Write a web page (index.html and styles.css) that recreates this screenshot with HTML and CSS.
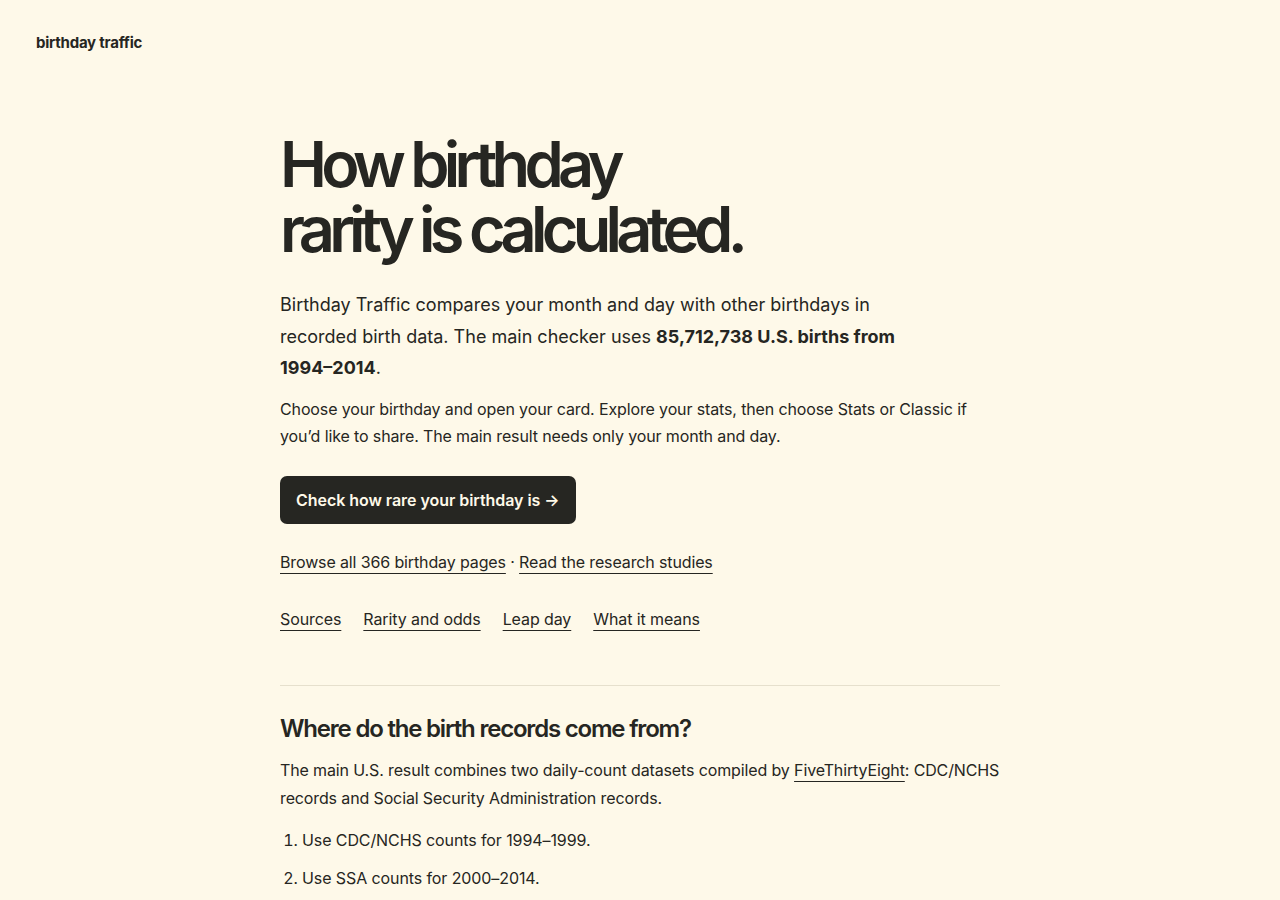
FILE: index.html
```html
<!DOCTYPE html>
<html lang="en">
<head>
<meta charset="utf-8">
<title>How birthday rarity is calculated</title>
<link rel="stylesheet" href="styles.css">
</head>
<body>
<header class="site-header">
  <a class="logo" href="#">birthday traffic</a>
</header>
<main class="content">
  <h1 class="title">How birthday<br>rarity is calculated.</h1>
  <p class="lead">Birthday Traffic compares your month and day with other birthdays in recorded birth data. The main checker uses <strong>85,712,738 U.S. births from 1994–2014</strong>.</p>
  <p class="intro">Choose your birthday and open your card. Explore your stats, then choose Stats or Classic if you’d like to share. The main result needs only your month and day.</p>
  <a class="cta" href="#">Check how rare your birthday is →</a>
  <p class="more"><a href="#">Browse all 366 birthday pages</a> · <a href="#">Read the research studies</a></p>
  <nav class="toc">
    <a href="#">Sources</a>
    <a href="#">Rarity and odds</a>
    <a href="#">Leap day</a>
    <a href="#">What it means</a>
  </nav>
  <section class="section">
    <h2>Where do the birth records come from?</h2>
    <p>The main U.S. result combines two daily-count datasets compiled by <a href="#">FiveThirtyEight</a>: CDC/NCHS records and Social Security Administration records.</p>
    <ol>
      <li>Use CDC/NCHS counts for 1994–1999.</li>
      <li>Use SSA counts for 2000–2014.</li>
    </ol>
  </section>
</main>
</body>
</html>
```
FILE: styles.css
```css
* { box-sizing: border-box; }
html, body { margin: 0; padding: 0; }
body {
  background: #fef9e9;
  color: #262622;
  font-family: Inter, "Noto Sans", sans-serif;
  -webkit-font-smoothing: antialiased;
}
a { color: inherit; }
.site-header {
  padding: 32px 36px 0;
  height: 52px;
}
.logo {
  font-size: 15px;
  font-weight: 700;
  letter-spacing: -0.015em;
  text-decoration: none;
  line-height: 20px;
}
.content {
  width: 720px;
  margin: 0 auto;
  padding-top: 80px;
}
.title {
  font-size: 63px;
  line-height: 65px;
  font-weight: 600;
  letter-spacing: -0.091em;
  margin: 0 0 27px;
}
.lead {
  font-size: 18px;
  line-height: 31.5px;
  max-width: 640px;
  margin: 0 0 12px;
}
.lead strong { font-weight: 700; }
.intro {
  font-size: 16px;
  line-height: 27px;
  letter-spacing: -0.008em;
  margin: 0 0 26px;
}
.cta {
  display: inline-block;
  background: #262622;
  color: #fef9e9;
  font-size: 16px;
  font-weight: 600;
  letter-spacing: -0.003em;
  line-height: 48px;
  height: 48px;
  padding: 0 16px;
  border-radius: 7px;
  text-decoration: none;
}
.more {
  font-size: 16px;
  line-height: 24px;
  letter-spacing: -0.008em;
  margin: 26px 0 0;
}
.more a, .toc a, .section p a {
  text-decoration: underline;
  text-decoration-thickness: 1px;
  text-underline-offset: 5px;
}
.toc {
  display: flex;
  gap: 22px;
  font-size: 16px;
  line-height: 24px;
  letter-spacing: -0.006em;
  margin-top: 33px;
}
.section {
  margin-top: 54px;
  border-top: 1px solid #e6e0cd;
  padding-top: 27px;
}
.section h2 {
  font-size: 24px;
  line-height: 32px;
  font-weight: 600;
  letter-spacing: -0.05em;
  margin: 0 0 11px;
}
.section p {
  font-size: 16px;
  line-height: 28px;
  letter-spacing: -0.008em;
  margin: 0 0 14px;
}
.section ol {
  margin: 0;
  padding-left: 22px;
  font-size: 16px;
  line-height: 28px;
  letter-spacing: -0.006em;
}
.section li { margin-bottom: 10px; }
```
